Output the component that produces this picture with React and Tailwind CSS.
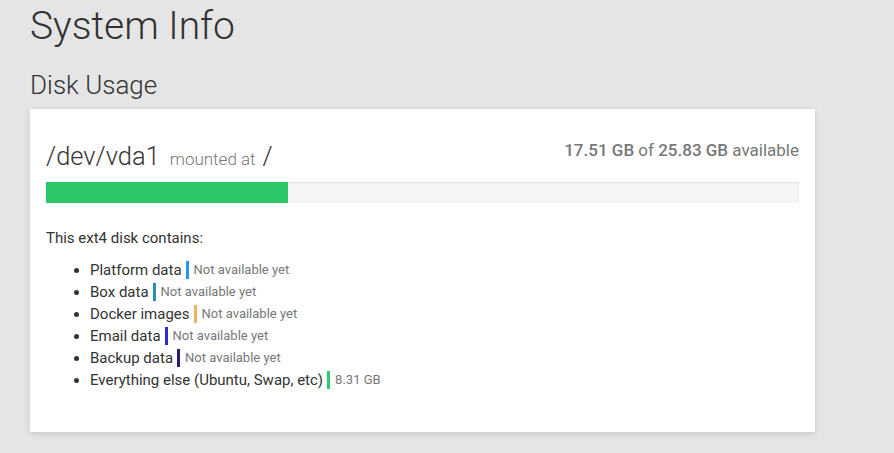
export default function App() {

  const items = [
    { name: "Platform data", color: "bg-[#2196f3]", value: "Not available yet" },
    { name: "Box data", color: "bg-[#2e8fa6]", value: "Not available yet" },
    { name: "Docker images", color: "bg-[#eeb464]", value: "Not available yet" },
    { name: "Email data", color: "bg-[#2b2bd0]", value: "Not available yet" },
    { name: "Backup data", color: "bg-[#231c78]", value: "Not available yet" },
    { name: "Everything else (Ubuntu, Swap, etc)", color: "bg-[#2ecc71]", value: "8.31 GB" }
  ]

  return (
    <div className="min-h-screen bg-[#e5e5e5] font-['Roboto',sans-serif] text-[#333] pl-[30px] pr-[79px]">

      {/* TITLE */}
      <h1 className="text-[39px] font-light leading-none pt-[7px]">System Info</h1>
      <h2 className="text-[26px] font-light leading-none mt-[26px]">Disk Usage</h2>

      {/* CARD */}
      <div className="bg-white mt-[11px] shadow-[0_2px_6px_rgba(0,0,0,0.12)] px-[16px] pt-[29px] h-[323px]">

        <div className="flex items-start justify-between">
          <div className="flex items-baseline text-[#333] leading-[37px]">
            <span className="text-[25.5px] font-light">/dev/vda1</span>
            <span className="text-[17px] font-light text-[#777] ml-[10px]">mounted at</span>
            <span className="text-[25.5px] font-light ml-[7px]">/</span>
          </div>
          <div className="text-[17px] leading-[25px] text-[#777]">
            <span className="font-medium">17.51 GB</span> of <span className="font-medium">25.83 GB</span> available
          </div>
        </div>

        {/* BAR */}
        <div className="h-[21px] mt-[4px] bg-[#f5f5f5] shadow-[inset_0_1px_2px_rgba(0,0,0,0.1)] flex">
          <div className="h-full w-[32.2%] bg-[#29c765]"></div>
        </div>

        <p className="text-[15px] mt-[24px] leading-[22px]">This ext4 disk contains:</p>

        <ul className="list-disc pl-[44px] mt-[10px] text-[15px] leading-[22px]">
          {items.map((it, i) => (
            <li key={i}>
              <span className="inline-flex items-center">
                {it.name}
                <span className={"inline-block w-[3px] h-[18px] ml-[4px] mr-[5px] " + it.color}></span>
                <span className="text-[13px] text-[#777]">{it.value}</span>
              </span>
            </li>
          ))}
        </ul>

      </div>

    </div>
  )
}
